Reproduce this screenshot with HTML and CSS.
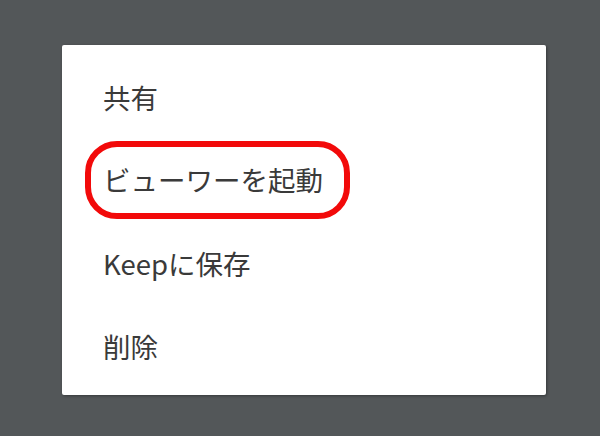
FILE: index.html
```html
<!DOCTYPE html>
<html lang="ja">
  <head>
    <meta charset="UTF-8" />
    <meta name="viewport" content="width=device-width, initial-scale=1.0" />
    <title>Menu</title>
    <link rel="stylesheet" href="styles.css">
  </head>
  <body>
    <div class="menu">
      <div class="menu-item">共有</div>
      <div class="menu-item"><span class="marked">ビューワーを起動</span></div>
      <div class="menu-item">Keepに保存</div>
      <div class="menu-item">削除</div>
    </div>
  </body>
</html>
```

FILE: styles.css
```css
* {
  box-sizing: border-box;
}
body {
  margin: 0;
  padding: 45px 0 0 62px;
  height: 100vh;
  background-color: #535759;
  font-family: "Noto Sans CJK JP", "Noto Sans", sans-serif;
}
.menu {
  width: 484px;
  height: 350px;
  padding: 10px 0;
  background: white;
  box-shadow: 1px 1px 3px rgba(0, 0, 0, 0.35);
  border-radius: 2px;
}
.menu-item {
  height: 83px;
  display: flex;
  align-items: center;
  padding-left: 41px;
  font-size: 27.5px;
  color: #3a3a3a;
}
.marked {
  position: relative;
  line-height: 1;
}
.marked::after {
  content: "";
  position: absolute;
  left: -18px;
  right: -27px;
  top: -25px;
  bottom: -26px;
  border: 6px solid #f20a0a;
  border-radius: 32px;
}
```
